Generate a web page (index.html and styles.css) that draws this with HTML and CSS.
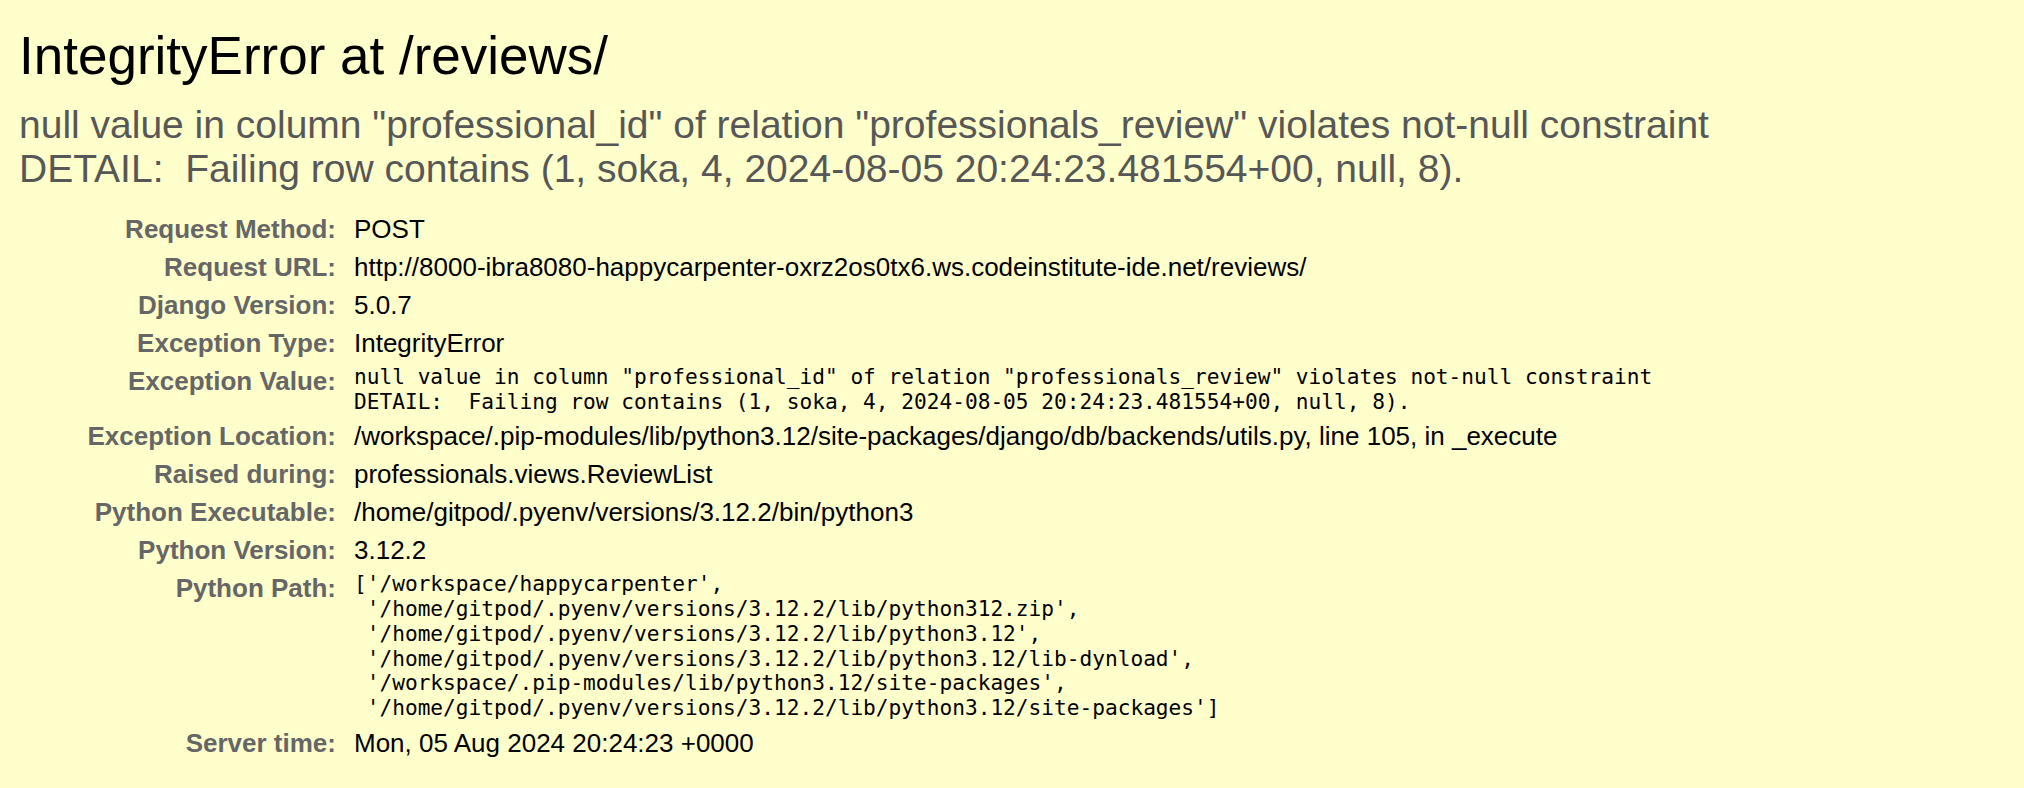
FILE: index.html
```html
<!DOCTYPE html>
<html lang="en">
<head>
<meta charset="utf-8">
<title>IntegrityError at /reviews/</title>
<link rel="stylesheet" href="styles.css">
</head>
<body>
<div class="summary">
  <h1 class="title">IntegrityError at /reviews/</h1>
  <pre class="exc-value">null value in column "professional_id" of relation "professionals_review" violates not-null constraint
DETAIL:  Failing row contains (1, soka, 4, 2024-08-05 20:24:23.481554+00, null, 8).</pre>
  <table class="meta">
    <tbody>
      <tr><th>Request Method:</th><td>POST</td></tr>
      <tr><th>Request URL:</th><td>http://8000-ibra8080-happycarpenter-oxrz2os0tx6.ws.codeinstitute-ide.net/reviews/</td></tr>
      <tr><th>Django Version:</th><td>5.0.7</td></tr>
      <tr><th>Exception Type:</th><td>IntegrityError</td></tr>
      <tr><th>Exception Value:</th><td><pre class="mono">null value in column "professional_id" of relation "professionals_review" violates not-null constraint
DETAIL:  Failing row contains (1, soka, 4, 2024-08-05 20:24:23.481554+00, null, 8).</pre></td></tr>
      <tr><th>Exception Location:</th><td>/workspace/.pip-modules/lib/python3.12/site-packages/django/db/backends/utils.py, line 105, in _execute</td></tr>
      <tr><th>Raised during:</th><td>professionals.views.ReviewList</td></tr>
      <tr><th>Python Executable:</th><td>/home/gitpod/.pyenv/versions/3.12.2/bin/python3</td></tr>
      <tr><th>Python Version:</th><td>3.12.2</td></tr>
      <tr><th>Python Path:</th><td><pre class="mono">['/workspace/happycarpenter',
 '/home/gitpod/.pyenv/versions/3.12.2/lib/python312.zip',
 '/home/gitpod/.pyenv/versions/3.12.2/lib/python3.12',
 '/home/gitpod/.pyenv/versions/3.12.2/lib/python3.12/lib-dynload',
 '/workspace/.pip-modules/lib/python3.12/site-packages',
 '/home/gitpod/.pyenv/versions/3.12.2/lib/python3.12/site-packages']</pre></td></tr>
      <tr><th>Server time:</th><td>Mon, 05 Aug 2024 20:24:23 +0000</td></tr>
    </tbody>
  </table>
</div>
</body>
</html>
```

FILE: styles.css
```css
html, body {
  margin: 0;
  padding: 0;
}

body {
  background: #ffc;
  color: #000;
  font-family: "Liberation Sans", Arial, Helvetica, sans-serif;
  font-size: 26px;
  min-height: 788px;
}

.summary {
  padding: 26px 19px 30px;
}

.title {
  margin: 0;
  font-size: 53px;
  font-weight: normal;
  line-height: 1.15;
}

.exc-value {
  margin: 16px 0 19px;
  font-family: inherit;
  font-size: 39px;
  line-height: 1.13;
  color: #575757;
  white-space: pre-wrap;
}

.meta {
  border: none;
  border-collapse: collapse;
  background: transparent;
}

.meta th {
  width: 312px;
  padding: 3px 13px 3px 5px;
  text-align: right;
  vertical-align: top;
  color: #666;
  font-weight: bold;
  line-height: 32px;
}

.meta td {
  padding: 3px 5px;
  vertical-align: top;
  line-height: 32px;
}

.mono {
  margin: 0;
  font-family: "DejaVu Sans Mono", "Liberation Mono", monospace;
  font-size: 21.15px;
  line-height: 24.7px;
  white-space: pre-wrap;
}
```
